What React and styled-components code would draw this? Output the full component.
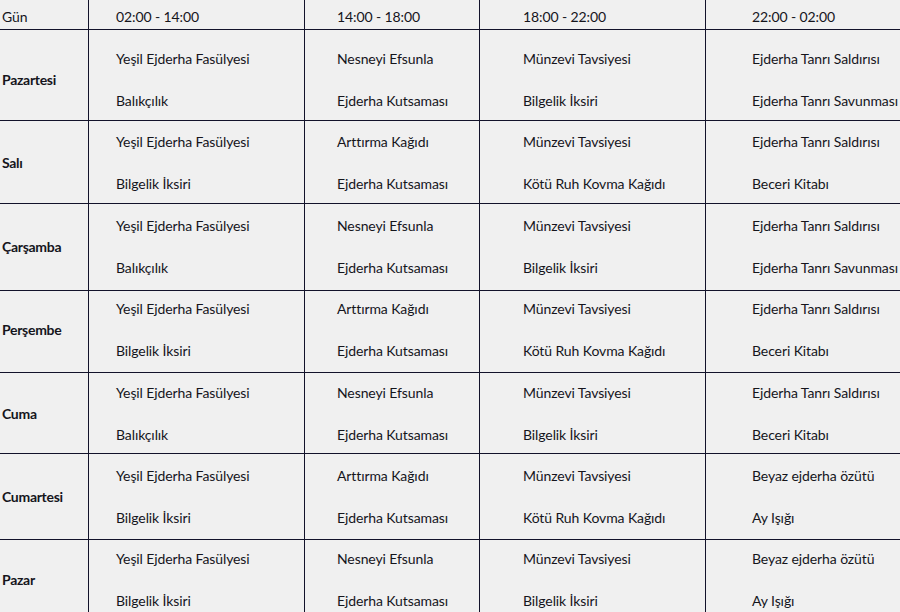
import React from "react";
import styled, { createGlobalStyle } from "styled-components";

const GlobalStyle = createGlobalStyle`
    html, body {
        margin: 0;
        padding: 0;
        background: #f0f0f0;
    }
    body {
        font-family: Lato, "Noto Sans", sans-serif;
        font-size: 14px;
        letter-spacing: -0.1px;
        color: #15151c;
    }
`;

const columns = [
    { title: "Gün", width: "89px", pad: 2 },
    { title: "02:00 - 14:00", width: "216px", pad: 27 },
    { title: "14:00 - 18:00", width: "175px", pad: 32 },
    { title: "18:00 - 22:00", width: "226px", pad: 43 },
    { title: "22:00 - 02:00", width: "1fr", pad: 46 },
];

const days = [
    {
        name: "Pazartesi", height: 91, shift: 10,
        slots: [
            ["Yeşil Ejderha Fasülyesi", "Balıkçılık"],
            ["Nesneyi Efsunla", "Ejderha Kutsaması"],
            ["Münzevi Tavsiyesi", "Bilgelik İksiri"],
            ["Ejderha Tanrı Saldırısı", "Ejderha Tanrı Savunması"],
        ],
    },
    {
        name: "Salı", height: 83, shift: 2,
        slots: [
            ["Yeşil Ejderha Fasülyesi", "Bilgelik İksiri"],
            ["Arttırma Kağıdı", "Ejderha Kutsaması"],
            ["Münzevi Tavsiyesi", "Kötü Ruh Kovma Kağıdı"],
            ["Ejderha Tanrı Saldırısı", "Beceri Kitabı"],
        ],
    },
    {
        name: "Çarşamba", height: 87, shift: -1,
        slots: [
            ["Yeşil Ejderha Fasülyesi", "Balıkçılık"],
            ["Nesneyi Efsunla", "Ejderha Kutsaması"],
            ["Münzevi Tavsiyesi", "Bilgelik İksiri"],
            ["Ejderha Tanrı Saldırısı", "Ejderha Tanrı Savunması"],
        ],
    },
    {
        name: "Perşembe", height: 82, shift: -3,
        slots: [
            ["Yeşil Ejderha Fasülyesi", "Bilgelik İksiri"],
            ["Arttırma Kağıdı", "Ejderha Kutsaması"],
            ["Münzevi Tavsiyesi", "Kötü Ruh Kovma Kağıdı"],
            ["Ejderha Tanrı Saldırısı", "Beceri Kitabı"],
        ],
    },
    {
        name: "Cuma", height: 81, shift: 1,
        slots: [
            ["Yeşil Ejderha Fasülyesi", "Balıkçılık"],
            ["Nesneyi Efsunla", "Ejderha Kutsaması"],
            ["Münzevi Tavsiyesi", "Bilgelik İksiri"],
            ["Ejderha Tanrı Saldırısı", "Beceri Kitabı"],
        ],
    },
    {
        name: "Cumartesi", height: 86, shift: 0,
        slots: [
            ["Yeşil Ejderha Fasülyesi", "Bilgelik İksiri"],
            ["Arttırma Kağıdı", "Ejderha Kutsaması"],
            ["Münzevi Tavsiyesi", "Kötü Ruh Kovma Kağıdı"],
            ["Beyaz ejderha özütü", "Ay Işığı"],
        ],
    },
    {
        name: "Pazar", height: 80, shift: 0,
        slots: [
            ["Yeşil Ejderha Fasülyesi", "Bilgelik İksiri"],
            ["Nesneyi Efsunla", "Ejderha Kutsaması"],
            ["Münzevi Tavsiyesi", "Bilgelik İksiri"],
            ["Beyaz ejderha özütü", "Ay Işığı"],
        ],
    },
];

const Table = styled.div`
    display: grid;
    grid-template-columns: ${columns.map((c) => c.width).join(" ")};
    width: 900px;
`;

// shift > 0 pushes content down, shift < 0 pulls it up
const Cell = styled.div`
    box-sizing: border-box;
    height: ${(p) => p.$height}px;
    padding-left: ${(p) => p.$pad}px;
    padding-top: ${(p) => Math.max(p.$shift || 0, 0)}px;
    padding-bottom: ${(p) => Math.max(-(p.$shift || 0), 0)}px;
    border-bottom: 1px solid #12122a;
    border-right: ${(p) => (p.$last ? "none" : "1px solid #12122a")};
    display: flex;
    flex-direction: column;
    justify-content: center;
    gap: 22px;
    line-height: 20px;
    white-space: nowrap;
    overflow: hidden;
`;

const HeadCell = styled(Cell)`
    height: 30px;
    padding-top: 5px;
`;

const DayName = styled.span`
    font-weight: 700;
    letter-spacing: -0.3px;
`;

const App = () => {
    return <>
        <GlobalStyle />
        <Table>
            {columns.map((c, i) =>
                <HeadCell key={c.title} $pad={c.pad} $last={i === columns.length - 1}>
                    {c.title}
                </HeadCell>
            )}
            {days.map((d) =>
                <React.Fragment key={d.name}>
                    <Cell $height={d.height} $pad={columns[0].pad} $shift={d.shift}>
                        <DayName>{d.name}</DayName>
                    </Cell>
                    {d.slots.map((items, i) =>
                        <Cell
                            key={i}
                            $height={d.height}
                            $pad={columns[i + 1].pad}
                            $shift={d.shift}
                            $last={i === d.slots.length - 1}
                        >
                            {items.map((t) => <span key={t}>{t}</span>)}
                        </Cell>
                    )}
                </React.Fragment>
            )}
        </Table>
    </>
};

export default App;
